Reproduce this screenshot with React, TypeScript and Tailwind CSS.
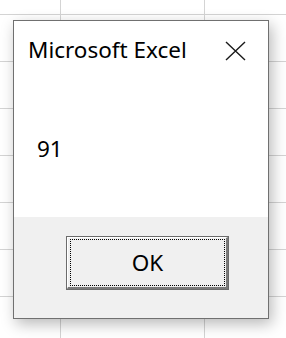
import React from 'react';

const rows = Array.from({ length: 8 });
const cols = Array.from({ length: 3 });

// spreadsheet grid behind the message box
const SheetGrid: React.FC = () => (
  <div className="flex flex-col -mt-[32px] -ml-[83px]">
    {rows.map((_, r) => (
      <div key={r} className="flex">
        {cols.map((_, c) => (
          <div key={c} className="w-[144px] h-[47px] shrink-0 border-r border-b border-[#d4d4d4]" />
        ))}
      </div>
    ))}
  </div>
);

export default function App() {
  return (
    <div
      className="relative w-[286px] h-[338px] overflow-hidden bg-white"
      style={{ fontFamily: '"Noto Sans", "Open Sans", sans-serif' }}
    >
      <SheetGrid />

      {/* Message box */}
      <div className="absolute left-[13px] top-[20px] w-[256px] h-[299px] flex flex-col border border-[#707070] bg-white shadow-[3px_5px_14px_rgba(0,0,0,0.28)]">
        <div className="h-[196px] flex flex-col">
          <div className="flex items-center justify-between pl-[14px] pr-[22px] pt-[12px]">
            <span className="text-[22.5px] leading-[34px] text-black">Microsoft Excel</span>
            <svg width="21" height="20" viewBox="0 0 21 20" className="mt-[1px]">
              <path d="M1 1 L20 19 M20 1 L1 19" stroke="#1a1a1a" strokeWidth="1.4" fill="none" />
            </svg>
          </div>
          <div className="pl-[23px] pt-[65px] text-[22.5px] leading-[34px] text-black">91</div>
        </div>

        <div className="flex-1 bg-[#f0f0f0] flex justify-start pl-[52px] pt-[19px]">
          <button className="w-[163px] h-[54px] border border-[#6b6b6b] bg-[#f0f0f0] p-0 flex">
            <div className="flex-1 flex border-t border-l border-t-white border-l-white border-r-2 border-b-2 border-r-[#7a7a7a] border-b-[#7a7a7a] pt-[1px] pl-[2px] pr-[1px] pb-[1px]">
              <div className="flex-1 flex items-center justify-center border border-dotted border-black">
                <span className="text-[22.5px] leading-[30px] text-black">OK</span>
              </div>
            </div>
          </button>
        </div>
      </div>
    </div>
  );
}
